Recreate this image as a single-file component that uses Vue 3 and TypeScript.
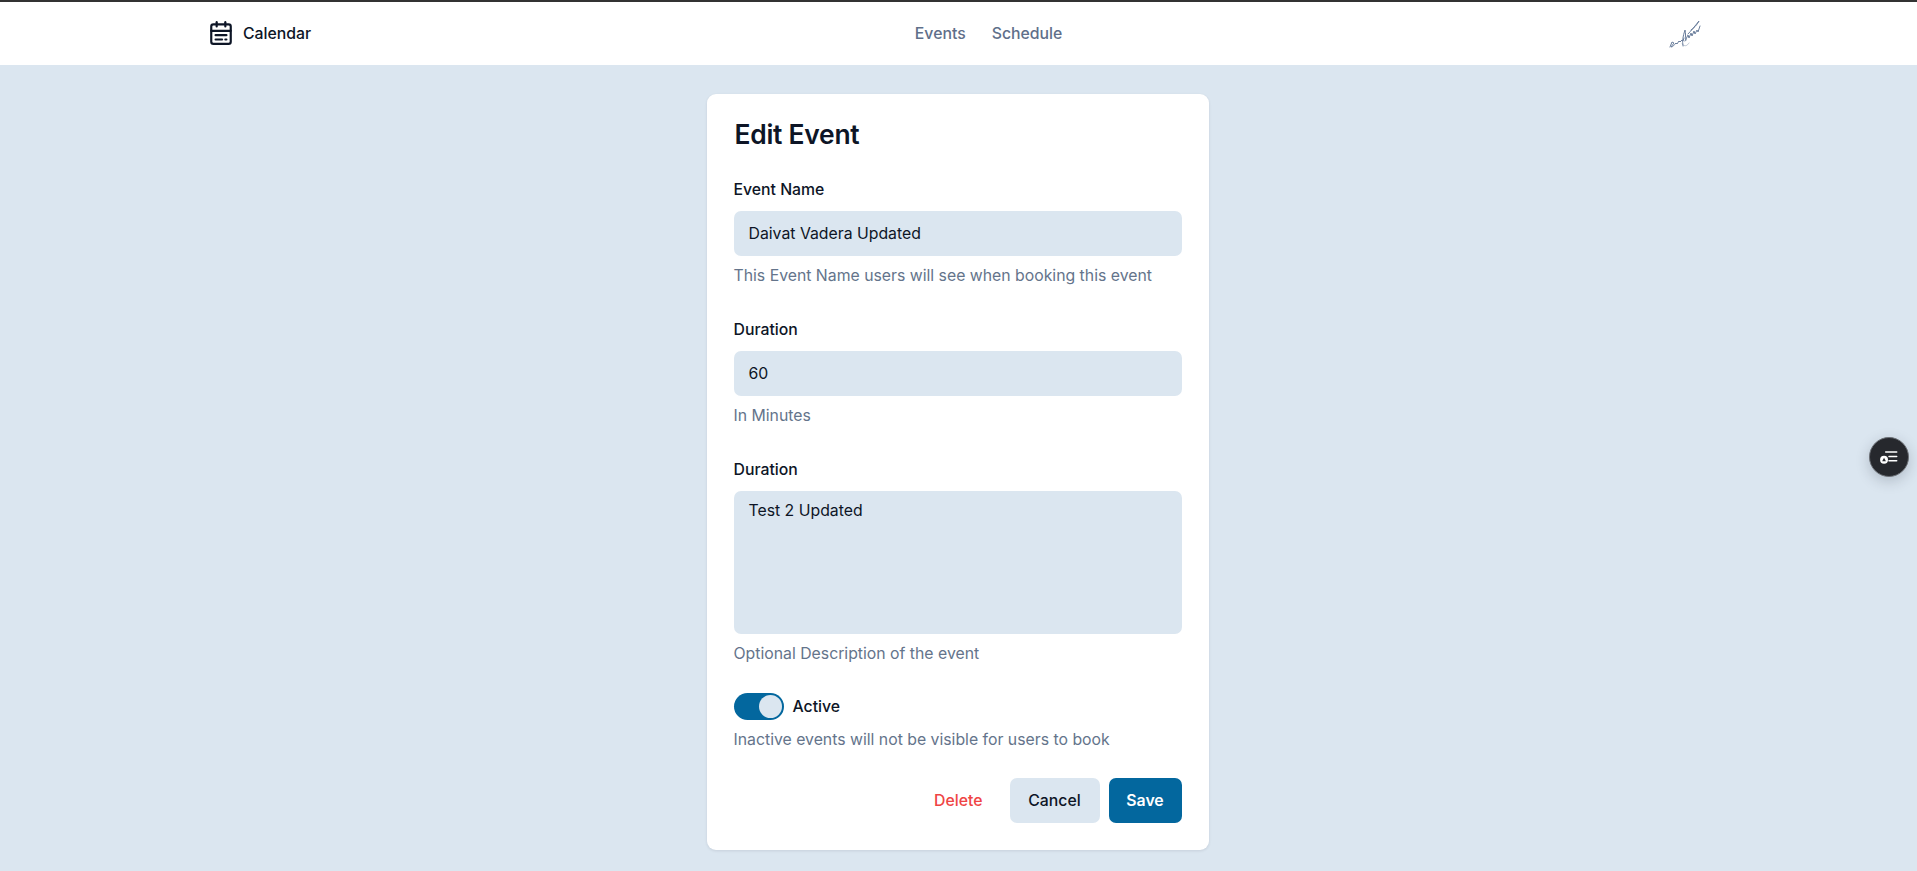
<script setup lang="ts">
const navLinks = ['Events', 'Schedule']

interface Field {
  label: string
  value: string
  hint: string
  multiline?: boolean
}

const fields: Field[] = [
  { label: 'Event Name', value: 'Daivat Vadera Updated', hint: 'This Event Name users will see when booking this event' },
  { label: 'Duration', value: '60', hint: 'In Minutes' },
  { label: 'Duration', value: 'Test 2 Updated', hint: 'Optional Description of the event', multiline: true },
]
</script>

<template>
  <div class="page">
    <header class="topbar">
      <div class="brand">
        <svg class="brand__icon" viewBox="0 0 24 24" fill="none" stroke="currentColor" stroke-width="2" stroke-linecap="round" stroke-linejoin="round">
          <path d="M8 2v4" />
          <path d="M16 2v4" />
          <rect x="3" y="4" width="18" height="18" rx="2" />
          <path d="M3 10h18" />
          <path d="M7 14h10" />
          <path d="M7 18h6" />
          <path d="M16 18h1" />
        </svg>
        <span>Calendar</span>
      </div>
      <nav class="nav">
        <a v-for="link in navLinks" :key="link" class="nav__link">{{ link }}</a>
      </nav>
      <div class="signature">
        <svg viewBox="0 0 34 30" fill="none" stroke="#6a7e9c" stroke-width="1" stroke-linecap="round" stroke-linejoin="round">
          <path d="M2 28l2-5 2 1-3 4c2 0 3-2 5-4l1 1 2-3 1 1 2-2 1 1 1-3" />
          <path d="M15 27c-1-5 0-10 2-16 1 3 0 7 1 10" />
          <path d="M17 22l3-6 1 3 2-5 1 3 2-5 1 3 2-4 1 2 2-6" />
          <path d="M20 15c3-3 7-8 11-13-2 4-5 7-8 9" />
          <path d="M14 25c3 3 5 2 7-1" opacity="0.4" />
        </svg>
      </div>
    </header>

    <main class="content">
      <section class="card">
        <h1 class="card__title">Edit Event</h1>

        <div v-for="(field, i) in fields" :key="i" class="field">
          <div class="field__label">{{ field.label }}</div>
          <div class="field__control" :class="{ 'field__control--area': field.multiline }">{{ field.value }}</div>
          <p class="field__hint">{{ field.hint }}</p>
        </div>

        <div class="field field--switch">
          <div class="switch-row">
            <span class="switch"><span class="switch__thumb" /></span>
            <span class="switch-row__label">Active</span>
          </div>
          <p class="field__hint">Inactive events will not be visible for users to book</p>
        </div>

        <div class="actions">
          <button class="btn btn--ghost">Delete</button>
          <button class="btn btn--secondary">Cancel</button>
          <button class="btn btn--primary">Save</button>
        </div>
      </section>
    </main>

    <button class="fab" aria-label="Tasks">
      <svg viewBox="0 0 20 20" fill="none" stroke="#fff" stroke-width="1.4" stroke-linecap="round">
        <path d="M7 5.5h10" />
        <path d="M10 9.5h7" />
        <path d="M10 13.5h7" />
        <circle cx="5.5" cy="12.5" r="3.6" fill="#fff" stroke="none" />
        <path d="M5.5 10.6l1.7 3.2H3.8z" fill="#26282d" stroke="none" />
      </svg>
    </button>
  </div>
</template>

<style>
html,
body {
  margin: 0;
  background: #dbe6f0;
}
</style>

<style scoped>
.page {
  position: relative;
  height: 871px;
  overflow: hidden;
  background: #dbe6f0;
  color: #0d1526;
  font-family: Inter, "Liberation Sans", sans-serif;
  font-size: 15.8px;
}

.topbar {
  height: 63px;
  border-top: 2px solid #333;
  background: #fff;
  padding: 0 215px 0 208px;
  display: flex;
  justify-content: space-between;
  align-items: center;
}

.brand {
  display: flex;
  align-items: center;
  gap: 9px;
  font-weight: 500;
  margin-top: -1px;
}

.brand__icon {
  width: 26px;
  height: 26px;
}

.nav {
  display: flex;
  gap: 26px;
  margin: -1px 2px 0 0;
}

.nav__link {
  color: #5f6f8a;
  font-weight: 500;
}

.signature {
  width: 34px;
  height: 30px;
}

.signature svg {
  display: block;
  width: 100%;
  height: 100%;
}

.content {
  display: flex;
  justify-content: center;
  padding-top: 29px;
  padding-right: 2px;
}

.card {
  width: 448px;
  height: 704px;
  padding: 25px 27px 27px;
  background: #fff;
  border-radius: 9px;
  box-shadow: 0 1px 3px rgba(15, 23, 42, 0.1);
}

.card__title {
  margin: 0 0 0 1px;
  font-size: 26.4px;
  line-height: 30px;
  font-weight: 600;
  letter-spacing: -0.25px;
}

.field {
  margin-top: 30px;
}

.field + .field {
  margin-top: 32px;
}

.field--switch.field {
  margin-top: 28px;
}

.field__label {
  line-height: 22px;
  font-weight: 500;
}

.field__control {
  margin-top: 10px;
  height: 45px;
  box-sizing: border-box;
  padding: 0 15px;
  display: flex;
  align-items: center;
  background: #dbe6f0;
  border-radius: 7px;
}

.field__control--area {
  height: 143px;
  align-items: flex-start;
  padding-top: 10px;
}

.field__hint {
  margin: 9px 0 0;
  line-height: 22px;
  color: #64748b;
}

.switch-row {
  display: flex;
  align-items: center;
  gap: 9px;
  height: 27px;
}

.switch-row__label {
  font-weight: 500;
}

.switch {
  width: 50px;
  height: 27px;
  box-sizing: border-box;
  padding: 2px;
  display: flex;
  justify-content: flex-end;
  background: #03679e;
  border-radius: 14px;
}

.switch__thumb {
  width: 23px;
  height: 23px;
  background: #dbe6f0;
  border-radius: 50%;
}

.actions {
  margin-top: 27px;
  display: flex;
  justify-content: flex-end;
  gap: 9px;
}

.btn {
  height: 45px;
  border: 0;
  border-radius: 7px;
  font: inherit;
  font-weight: 500;
}

.btn--ghost {
  padding: 0 18px;
  background: transparent;
  color: #ef4444;
}

.btn--secondary {
  width: 90px;
  background: #dbe6f0;
  color: #0d1526;
}

.btn--primary {
  width: 73px;
  background: #03679e;
  color: #fff;
  font-weight: 600;
}

.fab {
  position: absolute;
  right: 8px;
  top: 437px;
  width: 40px;
  height: 40px;
  padding: 8px;
  border: 1px solid #6b6f75;
  border-radius: 50%;
  background: #26282d;
  box-shadow: 0 4px 14px rgba(30, 40, 60, 0.22);
}

.fab svg {
  display: block;
  width: 100%;
  height: 100%;
}
</style>
